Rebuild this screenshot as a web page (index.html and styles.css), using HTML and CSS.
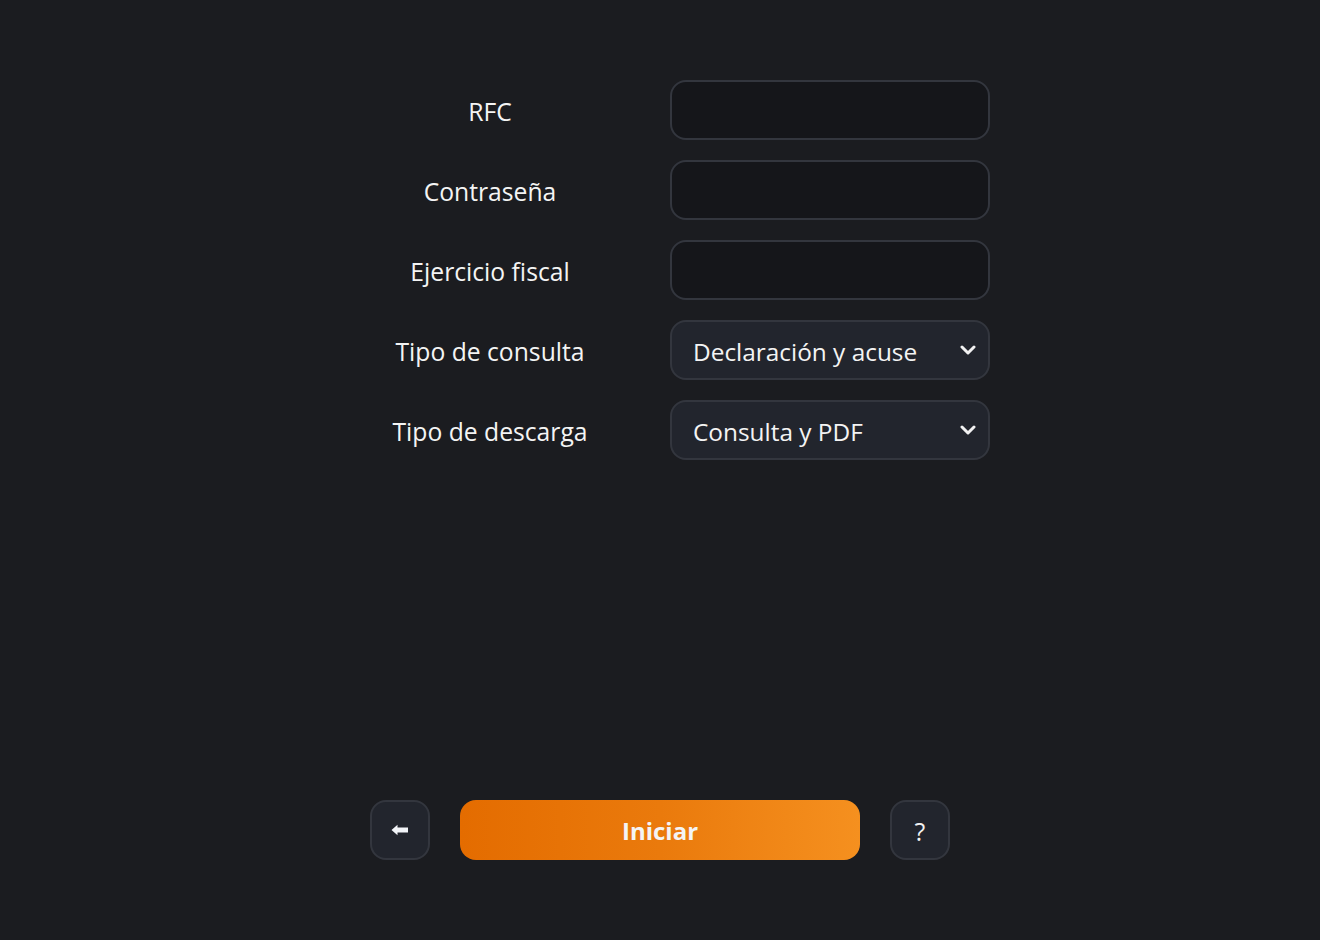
FILE: index.html
```html
<!DOCTYPE html>
<html lang="es">
<head>
<meta charset="utf-8">
<title>Consulta</title>
<link rel="stylesheet" href="styles.css">
</head>
<body>
<main class="page">
  <form class="form">
    <label class="label" for="rfc">RFC</label>
    <input class="field" id="rfc" type="text">
    <label class="label" for="pass">Contraseña</label>
    <input class="field" id="pass" type="password">
    <label class="label" for="year">Ejercicio fiscal</label>
    <input class="field" id="year" type="text">
    <label class="label" for="tc">Tipo de consulta</label>
    <div class="select">
      <span class="select-text">Declaración y acuse</span>
      <svg class="chev" width="16" height="10" viewBox="0 0 16 10"><path d="M2 2 L8 8 L14 2" fill="none" stroke="#f2f2f2" stroke-width="3" stroke-linecap="round" stroke-linejoin="round"/></svg>
    </div>
    <label class="label" for="td">Tipo de descarga</label>
    <div class="select">
      <span class="select-text">Consulta y PDF</span>
      <svg class="chev" width="16" height="10" viewBox="0 0 16 10"><path d="M2 2 L8 8 L14 2" fill="none" stroke="#f2f2f2" stroke-width="3" stroke-linecap="round" stroke-linejoin="round"/></svg>
    </div>
  </form>
  <div class="actions">
    <button class="icon-btn" type="button">
      <svg width="18" height="12" viewBox="0 0 18 12"><path d="M0.5 6 L6.5 0.8 L6.5 3.5 L17 3.5 L17 8.5 L6.5 8.5 L6.5 11.2 Z" fill="#f2f4f8"/></svg>
    </button>
    <button class="primary" type="button">Iniciar</button>
    <button class="icon-btn q" type="button">?</button>
  </div>
</main>
</body>
</html>
```

FILE: styles.css
```css
html, body {
  margin: 0;
  padding: 0;
  background: #1b1c20;
  height: 100%;
}
body {
  font-family: "Open Sans", "Noto Sans", sans-serif;
  color: #f2f2f2;
}
.page {
  width: 1320px;
  height: 940px;
  padding-top: 80px;
  box-sizing: border-box;
}
.form {
  width: 620px;
  margin-left: 370px;
  display: grid;
  grid-template-columns: 240px 320px;
  column-gap: 60px;
  row-gap: 20px;
}
.label {
  height: 60px;
  display: flex;
  align-items: center;
  justify-content: center;
  font-size: 24.7px;
  color: #f4f4f4;
  padding-top: 2px;
  box-sizing: border-box;
  white-space: nowrap;
}
.field {
  width: 320px;
  height: 60px;
  box-sizing: border-box;
  background: #15161a;
  border: 2px solid #33363e;
  border-radius: 16px;
  outline: none;
  color: #f2f2f2;
  font: inherit;
}
.select {
  height: 60px;
  box-sizing: border-box;
  background: #22252d;
  border: 2px solid #33363e;
  border-radius: 16px;
  display: flex;
  align-items: center;
  padding: 0 12px 0 21px;
}
.select-text {
  flex: 1;
  font-size: 24.4px;
  color: #f4f4f4;
  padding-top: 2px;
}
.actions {
  margin-top: 340px;
  display: flex;
  justify-content: center;
  gap: 30px;
}
.icon-btn {
  width: 60px;
  height: 60px;
  box-sizing: border-box;
  background: #22252d;
  border: 2px solid #33363e;
  border-radius: 16px;
  display: flex;
  align-items: center;
  justify-content: center;
  padding: 0;
  color: #f2f2f2;
}
.icon-btn.q {
  font-family: "Open Sans", sans-serif;
  font-size: 25px;
  padding-top: 2px;
}
.primary {
  width: 400px;
  height: 60px;
  border: none;
  border-radius: 16px;
  background: linear-gradient(90deg, #e46c00 0%, #ea7a0c 50%, #f5901f 100%);
  color: #f4f4f4;
  font-family: "Open Sans", sans-serif;
  font-weight: 700;
  font-size: 24px;
  padding-top: 2px;
}
```
